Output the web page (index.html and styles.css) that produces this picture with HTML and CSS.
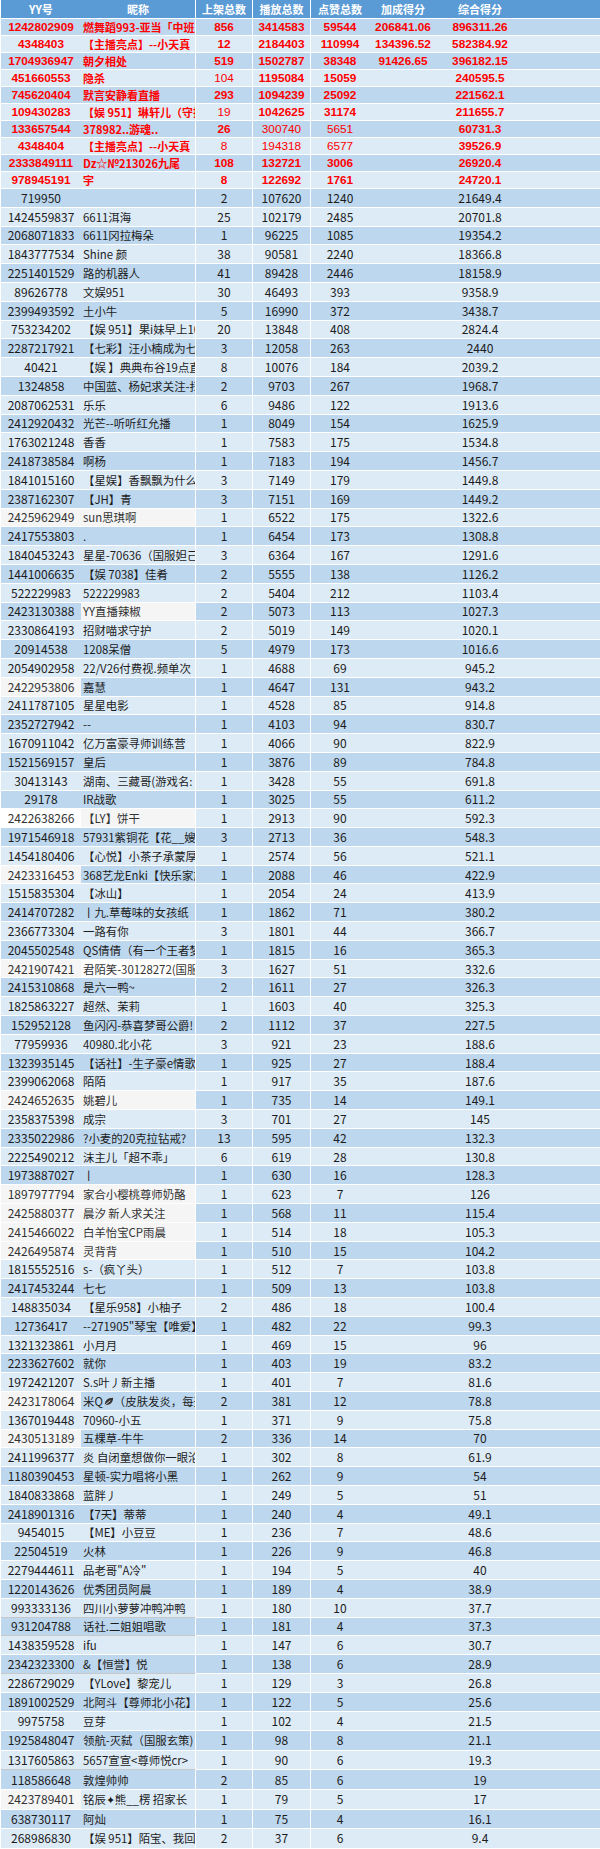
FILE: index.html
```html
<!DOCTYPE html>
<html lang="zh-CN">
<head>
<meta charset="utf-8">
<title>YY排行</title>
<link rel="stylesheet" href="styles.css">
</head>
<body>
<table class="rank">
<colgroup>
<col class="c-id"><col class="c-name"><col class="c-up"><col class="c-play"><col class="c-like"><col class="c-bonus"><col class="c-total">
</colgroup>
<thead>
<tr><th>YY号</th><th>昵称</th><th>上架总数</th><th>播放总数</th><th>点赞总数</th><th>加成得分</th><th>综合得分</th></tr>
</thead>
<tbody>
<tr class="red"><td>1242802909</td><td class="n">燃舞蹈993-亚当「中班」</td><td>856</td><td>3414583</td><td>59544</td><td>206841.06</td><td>896311.26</td></tr>
<tr class="red"><td>4348403</td><td class="n">【主播亮点】--小天真</td><td>12</td><td>2184403</td><td>110994</td><td>134396.52</td><td>582384.92</td></tr>
<tr class="red"><td>1704936947</td><td class="n">朝夕相处</td><td>519</td><td>1502787</td><td>38348</td><td>91426.65</td><td>396182.15</td></tr>
<tr class="red"><td>451660553</td><td class="n">隐杀</td><td class="lt">104</td><td>1195084</td><td>15059</td><td></td><td>240595.5</td></tr>
<tr class="red"><td>745620404</td><td class="n">默言安静看直播</td><td>293</td><td>1094239</td><td>25092</td><td></td><td>221562.1</td></tr>
<tr class="red"><td>109430283</td><td class="n">【娱 951】琳轩儿（守护</td><td class="lt">19</td><td>1042625</td><td>31174</td><td></td><td>211655.7</td></tr>
<tr class="red"><td>133657544</td><td class="n">378982..游魂..</td><td>26</td><td class="lt">300740</td><td class="lt">5651</td><td></td><td>60731.3</td></tr>
<tr class="red"><td>4348404</td><td class="n">【主播亮点】--小天真</td><td class="lt">8</td><td class="lt">194318</td><td class="lt">6577</td><td></td><td>39526.9</td></tr>
<tr class="red"><td>2333849111</td><td class="n">Dz☆№213026九尾</td><td>108</td><td>132721</td><td>3006</td><td></td><td>26920.4</td></tr>
<tr class="red"><td>978945191</td><td class="n">宇</td><td>8</td><td>122692</td><td>1761</td><td></td><td>24720.1</td></tr>
<tr><td>719950</td><td class="n"></td><td>2</td><td>107620</td><td>1240</td><td></td><td>21649.4</td></tr>
<tr><td>1424559837</td><td class="n">6611洱海</td><td>25</td><td>102179</td><td>2485</td><td></td><td>20701.8</td></tr>
<tr><td>2068071833</td><td class="n">6611冈拉梅朵</td><td>1</td><td>96225</td><td>1085</td><td></td><td>19354.2</td></tr>
<tr><td>1843777534</td><td class="n">Shine 颜</td><td>38</td><td>90581</td><td>2240</td><td></td><td>18366.8</td></tr>
<tr><td>2251401529</td><td class="n">路的机器人</td><td>41</td><td>89428</td><td>2446</td><td></td><td>18158.9</td></tr>
<tr><td>89626778</td><td class="n">文娱951</td><td>30</td><td>46493</td><td>393</td><td></td><td>9358.9</td></tr>
<tr><td>2399493592</td><td class="n">土小牛</td><td>5</td><td>16990</td><td>372</td><td></td><td>3438.7</td></tr>
<tr><td>753234202</td><td class="n">【娱 951】果i妹早上10点</td><td>20</td><td>13848</td><td>408</td><td></td><td>2824.4</td></tr>
<tr><td>2287217921</td><td class="n">【七彩】汪小楠成为七彩</td><td>3</td><td>12058</td><td>263</td><td></td><td>2440</td></tr>
<tr><td>40421</td><td class="n">【娱 】典典布谷19点直播</td><td>8</td><td>10076</td><td>184</td><td></td><td>2039.2</td></tr>
<tr><td>1324858</td><td class="n">中国蓝、杨妃求关注-扫码</td><td>2</td><td>9703</td><td>267</td><td></td><td>1968.7</td></tr>
<tr><td>2087062531</td><td class="n">乐乐</td><td>6</td><td>9486</td><td>122</td><td></td><td>1913.6</td></tr>
<tr><td>2412920432</td><td class="n">光芒--听听红允播</td><td>1</td><td>8049</td><td>154</td><td></td><td>1625.9</td></tr>
<tr><td>1763021248</td><td class="n">香香</td><td>1</td><td>7583</td><td>175</td><td></td><td>1534.8</td></tr>
<tr><td>2418738584</td><td class="n">啊杨</td><td>1</td><td>7183</td><td>194</td><td></td><td>1456.7</td></tr>
<tr><td>1841015160</td><td class="n">【星娱】香飘飘为什么么</td><td>3</td><td>7149</td><td>179</td><td></td><td>1449.8</td></tr>
<tr><td>2387162307</td><td class="n">【JH】青</td><td>3</td><td>7151</td><td>169</td><td></td><td>1449.2</td></tr>
<tr><td class="w">2425962949</td><td class="n w">sun思琪啊</td><td>1</td><td>6522</td><td>175</td><td></td><td>1322.6</td></tr>
<tr><td>2417553803</td><td class="n">.</td><td>1</td><td>6454</td><td>173</td><td></td><td>1308.8</td></tr>
<tr><td>1840453243</td><td class="n">星星-70636（国服妲己）</td><td>3</td><td>6364</td><td>167</td><td></td><td>1291.6</td></tr>
<tr><td>1441006635</td><td class="n">【娱 7038】佳肴</td><td>2</td><td>5555</td><td>138</td><td></td><td>1126.2</td></tr>
<tr><td>522229983</td><td class="n">522229983</td><td>2</td><td>5404</td><td>212</td><td></td><td>1103.4</td></tr>
<tr><td>2423130388</td><td class="n w">YY直播辣椒</td><td>2</td><td>5073</td><td>113</td><td></td><td>1027.3</td></tr>
<tr><td>2330864193</td><td class="n">招财喵求守护</td><td>2</td><td>5019</td><td>149</td><td></td><td>1020.1</td></tr>
<tr><td>20914538</td><td class="n">1208呆僧</td><td>5</td><td>4979</td><td>173</td><td></td><td>1016.6</td></tr>
<tr><td>2054902958</td><td class="n">22/V26付费视.频单次</td><td>1</td><td>4688</td><td>69</td><td></td><td>945.2</td></tr>
<tr><td class="w">2422953806</td><td class="n">嘉慧</td><td>1</td><td>4647</td><td>131</td><td></td><td>943.2</td></tr>
<tr><td>2411787105</td><td class="n">星星电影</td><td>1</td><td>4528</td><td>85</td><td></td><td>914.8</td></tr>
<tr><td>2352727942</td><td class="n">--</td><td>1</td><td>4103</td><td>94</td><td></td><td>830.7</td></tr>
<tr><td>1670911042</td><td class="n">亿万富豪寻师训练营</td><td>1</td><td>4066</td><td>90</td><td></td><td>822.9</td></tr>
<tr><td>1521569157</td><td class="n">皇后</td><td>1</td><td>3876</td><td>89</td><td></td><td>784.8</td></tr>
<tr><td>30413143</td><td class="n">湖南、三藏哥(游戏名:</td><td>1</td><td>3428</td><td>55</td><td></td><td>691.8</td></tr>
<tr><td>29178</td><td class="n">IR战歌</td><td>1</td><td>3025</td><td>55</td><td></td><td>611.2</td></tr>
<tr><td class="W">2422638266</td><td class="n w">【LY】饼干</td><td>1</td><td>2913</td><td>90</td><td></td><td>592.3</td></tr>
<tr><td>1971546918</td><td class="n">57931紫铜花【花__嫂】</td><td>3</td><td>2713</td><td>36</td><td></td><td>548.3</td></tr>
<tr><td>1454180406</td><td class="n">【心悦】小茶子承蒙厚爱</td><td>1</td><td>2574</td><td>56</td><td></td><td>521.1</td></tr>
<tr><td class="w">2423316453</td><td class="n">368艺龙Enki【快乐家族】</td><td>1</td><td>2088</td><td>46</td><td></td><td>422.9</td></tr>
<tr><td>1515835304</td><td class="n">【冰山】</td><td>1</td><td>2054</td><td>24</td><td></td><td>413.9</td></tr>
<tr><td>2414707282</td><td class="n">丨九.草莓味的女孩纸</td><td>1</td><td>1862</td><td>71</td><td></td><td>380.2</td></tr>
<tr><td>2366773304</td><td class="n">一路有你</td><td>3</td><td>1801</td><td>44</td><td></td><td>366.7</td></tr>
<tr><td>2045502548</td><td class="n">QS倩倩（有一个王者梦）</td><td>1</td><td>1815</td><td>16</td><td></td><td>365.3</td></tr>
<tr><td class="w">2421907421</td><td class="n W">君陌笑-30128272(国服)</td><td>3</td><td>1627</td><td>51</td><td></td><td>332.6</td></tr>
<tr><td>2415310868</td><td class="n">是六一鸭~</td><td>2</td><td>1611</td><td>27</td><td></td><td>326.3</td></tr>
<tr><td>1825863227</td><td class="n">超然、茉莉</td><td>1</td><td>1603</td><td>40</td><td></td><td>325.3</td></tr>
<tr><td>152952128</td><td class="n">鱼闪闪-恭喜梦哥公爵!</td><td>2</td><td>1112</td><td>37</td><td></td><td>227.5</td></tr>
<tr><td>77959936</td><td class="n">40980.北小花</td><td>3</td><td>921</td><td>23</td><td></td><td>188.6</td></tr>
<tr><td>1323935145</td><td class="n">【话社】-生子豪e情歌</td><td>1</td><td>925</td><td>27</td><td></td><td>188.4</td></tr>
<tr><td>2399062068</td><td class="n">陌陌</td><td>1</td><td>917</td><td>35</td><td></td><td>187.6</td></tr>
<tr><td class="w">2424652635</td><td class="n w">姚碧儿</td><td>1</td><td>735</td><td>14</td><td></td><td>149.1</td></tr>
<tr><td>2358375398</td><td class="n">成宗</td><td>3</td><td>701</td><td>27</td><td></td><td>145</td></tr>
<tr><td>2335022986</td><td class="n">?小麦的20克拉钻戒?</td><td>13</td><td>595</td><td>42</td><td></td><td>132.3</td></tr>
<tr><td>2225490212</td><td class="n">沫主儿「超不乖」</td><td>6</td><td>619</td><td>28</td><td></td><td>130.8</td></tr>
<tr><td>1973887027</td><td class="n">丨</td><td>1</td><td>630</td><td>16</td><td></td><td>128.3</td></tr>
<tr><td class="w">1897977794</td><td class="n w">家合小樱桃尊师奶酪</td><td>1</td><td>623</td><td>7</td><td></td><td>126</td></tr>
<tr><td class="w">2425880377</td><td class="n w">晨汐 新人求关注</td><td>1</td><td>568</td><td>11</td><td></td><td>115.4</td></tr>
<tr><td class="w">2415466022</td><td class="n w">白羊怡宝CP雨晨</td><td>1</td><td>514</td><td>18</td><td></td><td>105.3</td></tr>
<tr><td class="w">2426495874</td><td class="n w">灵背背</td><td>1</td><td>510</td><td>15</td><td></td><td>104.2</td></tr>
<tr><td>1815552516</td><td class="n">s-（疯丫头）</td><td>1</td><td>512</td><td>7</td><td></td><td>103.8</td></tr>
<tr><td>2417453244</td><td class="n">七七</td><td>1</td><td>509</td><td>13</td><td></td><td>103.8</td></tr>
<tr><td>148835034</td><td class="n">【星乐958】小柚子</td><td>2</td><td>486</td><td>18</td><td></td><td>100.4</td></tr>
<tr><td>12736417</td><td class="n">--271905"琴宝【唯爱】</td><td>1</td><td>482</td><td>22</td><td></td><td>99.3</td></tr>
<tr><td>1321323861</td><td class="n">小月月</td><td>1</td><td>469</td><td>15</td><td></td><td>96</td></tr>
<tr><td>2233627602</td><td class="n">就你</td><td>1</td><td>403</td><td>19</td><td></td><td>83.2</td></tr>
<tr><td>1972421207</td><td class="n">S.s叶丿新主播</td><td>1</td><td>401</td><td>7</td><td></td><td>81.6</td></tr>
<tr><td class="w">2423178064</td><td class="n">米Q<svg class="leaf" viewBox="0 0 12 12" aria-hidden="true"><path d="M2 10C2 5 5 2 11 2C11 8 7 10 2 10Z" fill="#333"/><path d="M2 10L8 5" stroke="#fff" stroke-width="0.9"/></svg>（皮肤发炎，每天</td><td>2</td><td>381</td><td>12</td><td></td><td>78.8</td></tr>
<tr><td>1367019448</td><td class="n">70960-小五</td><td>1</td><td>371</td><td>9</td><td></td><td>75.8</td></tr>
<tr><td class="w">2430513189</td><td class="n">五棵草-牛牛</td><td>2</td><td>336</td><td>14</td><td></td><td>70</td></tr>
<tr><td>2411996377</td><td class="n">炎 自闭童想做你一眼沦陷</td><td>1</td><td>302</td><td>8</td><td></td><td>61.9</td></tr>
<tr><td>1180390453</td><td class="n">星顿-实力唱将小黑</td><td>1</td><td>262</td><td>9</td><td></td><td>54</td></tr>
<tr><td>1840833868</td><td class="n">蓝胖丿</td><td>1</td><td>249</td><td>5</td><td></td><td>51</td></tr>
<tr><td>2418901316</td><td class="n">【7天】蒂蒂</td><td>1</td><td>240</td><td>4</td><td></td><td>49.1</td></tr>
<tr><td>9454015</td><td class="n">【ME】小豆豆</td><td>1</td><td>236</td><td>7</td><td></td><td>48.6</td></tr>
<tr><td>22504519</td><td class="n">火林</td><td>1</td><td>226</td><td>9</td><td></td><td>46.8</td></tr>
<tr><td>2279444611</td><td class="n">品老哥"A冷"</td><td>1</td><td>194</td><td>5</td><td></td><td>40</td></tr>
<tr><td>1220143626</td><td class="n">优秀团员阿晨</td><td>1</td><td>189</td><td>4</td><td></td><td>38.9</td></tr>
<tr class="gl"><td>993333136</td><td class="n">四川小萝萝冲鸭冲鸭</td><td>1</td><td>180</td><td>10</td><td></td><td>37.7</td></tr>
<tr class="gl"><td>931204788</td><td class="n">话社.二姐姐唱歌</td><td>1</td><td>181</td><td>4</td><td></td><td>37.3</td></tr>
<tr><td>1438359528</td><td class="n">ifu</td><td>1</td><td>147</td><td>6</td><td></td><td>30.7</td></tr>
<tr class="gl"><td>2342323300</td><td class="n">&amp;【恒誉】悦</td><td>1</td><td>138</td><td>6</td><td></td><td>28.9</td></tr>
<tr><td>2286729029</td><td class="n">【YLove】黎宠儿</td><td>1</td><td>129</td><td>3</td><td></td><td>26.8</td></tr>
<tr><td>1891002529</td><td class="n">北阿斗【尊师北小花】</td><td>1</td><td>122</td><td>5</td><td></td><td>25.6</td></tr>
<tr class="tall"><td>9975758</td><td class="n">豆芽</td><td>1</td><td>102</td><td>4</td><td></td><td>21.5</td></tr>
<tr class="tall"><td>1925848047</td><td class="n">领航-灭弑（国服玄策)</td><td>1</td><td>98</td><td>8</td><td></td><td>21.1</td></tr>
<tr class="tall gl"><td>1317605863</td><td class="n">5657宣宣&lt;尊师悦cr&gt;</td><td>1</td><td>90</td><td>6</td><td></td><td>19.3</td></tr>
<tr class="tall"><td>118586648</td><td class="n">敦煌帅帅</td><td>2</td><td>85</td><td>6</td><td></td><td>19</td></tr>
<tr class="tall"><td class="w">2423789401</td><td class="n">铭辰✦熊__楞 招家长</td><td>1</td><td>79</td><td>5</td><td></td><td>17</td></tr>
<tr class="tall"><td>638730117</td><td class="n">阿灿</td><td>1</td><td>75</td><td>4</td><td></td><td>16.1</td></tr>
<tr class="tall"><td>268986830</td><td class="n">【娱 951】陌宝、我回来了</td><td>2</td><td>37</td><td>6</td><td></td><td>9.4</td></tr>
</tbody>
</table>
</body>
</html>
```

FILE: styles.css
```css
html, body {
  margin: 0;
  padding: 0;
  background: #ffffff;
}

.rank {
  margin-left: 1px;
  width: 599px;
  table-layout: fixed;
  border-collapse: separate;
  border-spacing: 0;
  font-family: "Noto Sans CJK SC", "Microsoft YaHei", sans-serif;
  font-size: 12px;
  line-height: 14px;
  color: #1c1c1c;
}

.c-id { width: 80px; }
.c-name { width: 115px; }
.c-up { width: 57px; }
.c-play { width: 58px; }
.c-like { width: 58px; }
.c-bonus { width: 68px; }
.c-total { width: 163px; }

.rank th,
.rank td {
  padding: 0;
  text-align: center;
  vertical-align: middle;
  white-space: nowrap;
  overflow: hidden;
  border-bottom: 1px solid #ffffff;
  box-sizing: border-box;
}

.rank th:nth-child(2), .rank td:nth-child(2),
.rank th:nth-child(3), .rank td:nth-child(3),
.rank th:nth-child(4), .rank td:nth-child(4) {
  border-right: 1px solid #ffffff;
}

.rank th:last-child,
.rank td:last-child {
  padding-right: 77px;
}

.rank thead tr {
  height: 19px;
  background: #5b9bd5;
}

.rank th {
  color: #ffffff;
  font-weight: bold;
  font-size: 11px;
}

.rank tbody tr {
  height: 18.8px;
}

.rank tbody tr.tall {
  height: 19.6px;
}

.rank tbody tr:nth-child(odd) {
  background: #bdd7ee;
}

.rank tbody tr:nth-child(even) {
  background: #ddebf7;
}

.rank td.n {
  text-align: left;
  padding-left: 2px;
  font-size: 11.4px;
  text-overflow: clip;
}

.rank tbody tr.red {
  height: 17px;
  color: #ff0000;
  font-weight: bold;
  font-family: "Liberation Sans", "Noto Sans CJK SC", sans-serif;
}

.rank tbody tr.red td {
  font-size: 11.8px;
}

.rank tbody tr.red td.n {
  font-size: 11px;
  font-family: "Noto Sans CJK SC", sans-serif;
}

.rank tbody tr.red td.lt {
  font-weight: normal;
}

.rank td.w {
  background: #f5f5f5;
  color: #333333;
}

.rank td.W {
  background: #ffffff;
  color: #333333;
}

.rank tr.gl td:nth-child(1),
.rank tr.gl td:nth-child(2) {
  border-bottom-color: #c8c8c8;
}

.leaf {
  width: 11px;
  height: 11px;
  vertical-align: -1px;
}
```
